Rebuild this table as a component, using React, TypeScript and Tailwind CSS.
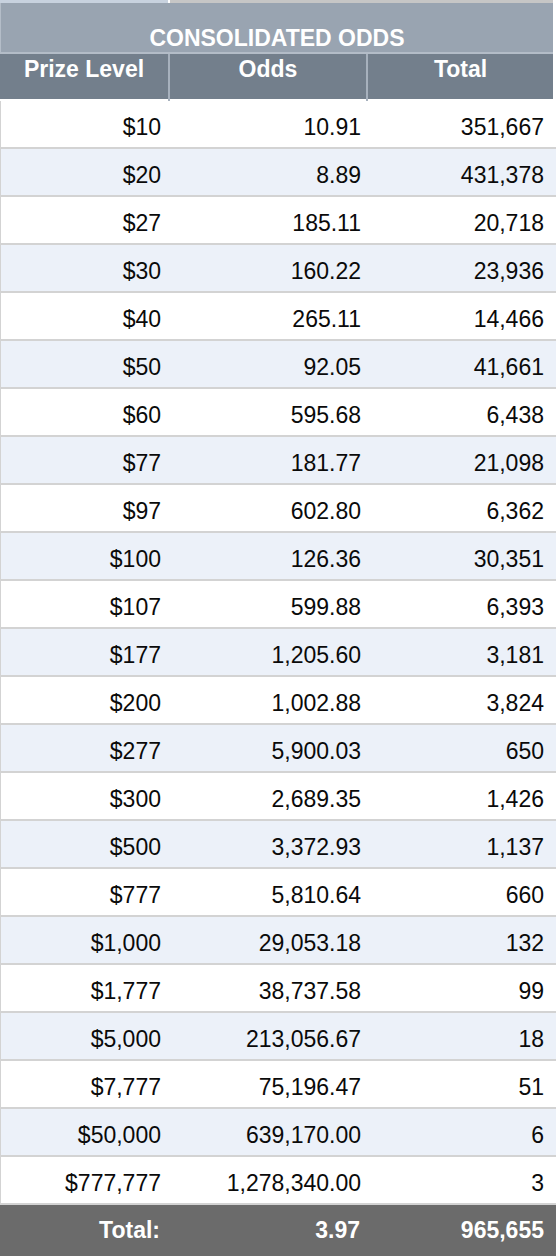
const rows: [string, string, string][] = [
  ["$10", "10.91", "351,667"],
  ["$20", "8.89", "431,378"],
  ["$27", "185.11", "20,718"],
  ["$30", "160.22", "23,936"],
  ["$40", "265.11", "14,466"],
  ["$50", "92.05", "41,661"],
  ["$60", "595.68", "6,438"],
  ["$77", "181.77", "21,098"],
  ["$97", "602.80", "6,362"],
  ["$100", "126.36", "30,351"],
  ["$107", "599.88", "6,393"],
  ["$177", "1,205.60", "3,181"],
  ["$200", "1,002.88", "3,824"],
  ["$277", "5,900.03", "650"],
  ["$300", "2,689.35", "1,426"],
  ["$500", "3,372.93", "1,137"],
  ["$777", "5,810.64", "660"],
  ["$1,000", "29,053.18", "132"],
  ["$1,777", "38,737.58", "99"],
  ["$5,000", "213,056.67", "18"],
  ["$7,777", "75,196.47", "51"],
  ["$50,000", "639,170.00", "6"],
  ["$777,777", "1,278,340.00", "3"],
];

export default function App() {
  return (
    <div className="w-[556px] h-[1256px] overflow-hidden bg-white font-['Liberation_Sans',Arial,sans-serif] text-[23px]">
      {/* cut-off edge of the row above */}
      <div className="flex h-[3px]">
        <div className="w-[168px] bg-[#c8d2df]" />
        <div className="w-[2px]" />
        <div className="flex-1 bg-[#c6c6c6]" />
        <div className="w-[3px]" />
      </div>

      {/* title */}
      <div className="mr-[3px] h-[49px] flex items-end justify-center pb-[2px] bg-[#99a4b1] border-l border-[#b4bdc8] font-bold text-white leading-none">
        <span>CONSOLIDATED ODDS</span>
      </div>
      <div className="mr-[3px] h-[2px] bg-[#b3bcc7]" />

      {/* column headers */}
      <div className="mr-[3px] h-[45px] grid grid-cols-[168px_2px_196px_2px_1fr] bg-[#737f8c] font-bold text-white leading-[26px]">
        <div className="text-center pt-[2px]">Prize Level</div>
        <div className="bg-[#a7b1bd]" />
        <div className="text-center pt-[2px]">Odds</div>
        <div className="bg-[#a7b1bd]" />
        <div className="text-center pt-[2px]">Total</div>
      </div>
      <div className="mr-[3px] h-[2px] grid grid-cols-[168px_2px_196px_2px_1fr]">
        <div />
        <div className="bg-[#a7b1bd]" />
        <div />
        <div className="bg-[#a7b1bd]" />
        <div />
      </div>

      {/* body */}
      {rows.map((r, i) => (
        <div
          key={r[0]}
          className={`h-[48px] grid grid-cols-[170px_198px_1fr] items-center border-b-2 border-l border-[#d3d3d3] text-[#0a0a0a] pt-[7px] ${
            i % 2 === 1 ? "bg-[#ecf1f9]" : "bg-white"
          }`}
        >
          <div className="text-right pr-[10px]">{r[0]}</div>
          <div className="text-right pr-[8px]">{r[1]}</div>
          <div className="text-right pr-[12px]">{r[2]}</div>
        </div>
      ))}

      {/* total */}
      <div className="h-[51px] grid grid-cols-[170px_198px_1fr] items-center bg-[#6b6b6b] font-bold text-white">
        <div className="text-right pr-[10px]">Total:</div>
        <div className="text-right pr-[8px]">3.97</div>
        <div className="text-right pr-[12px]">965,655</div>
      </div>
    </div>
  );
}
